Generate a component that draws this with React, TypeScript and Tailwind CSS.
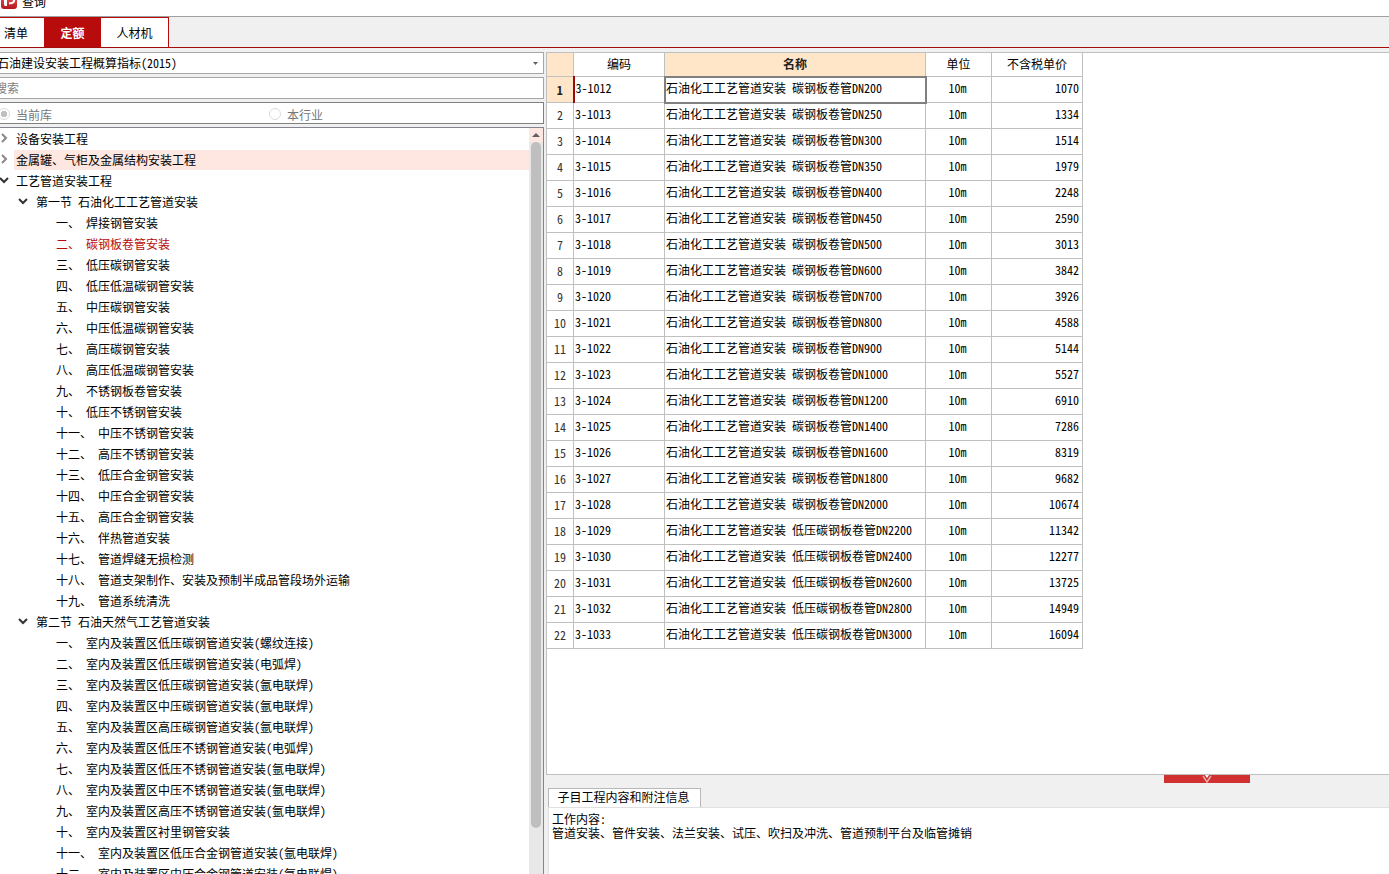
import React, { useState } from 'react';

const TABS = ['清单', '定额', '人材机'];

type TreeNode = { level: number; text: string; state?: 'open' | 'closed'; hover?: boolean };

const section = (title: string, items: string[]): TreeNode[] => [
  { level: 1, text: title, state: 'open' },
  ...items.map((text) => ({ level: 2, text })),
];

const TREE: TreeNode[] = [
  { level: 0, text: '设备安装工程', state: 'closed' },
  { level: 0, text: '金属罐、气柜及金属结构安装工程', state: 'closed', hover: true },
  { level: 0, text: '工艺管道安装工程', state: 'open' },
  ...section('第一节 石油化工工艺管道安装', [
    '一、 焊接钢管安装',
    '二、 碳钢板卷管安装',
    '三、 低压碳钢管安装',
    '四、 低压低温碳钢管安装',
    '五、 中压碳钢管安装',
    '六、 中压低温碳钢管安装',
    '七、 高压碳钢管安装',
    '八、 高压低温碳钢管安装',
    '九、 不锈钢板卷管安装',
    '十、 低压不锈钢管安装',
    '十一、 中压不锈钢管安装',
    '十二、 高压不锈钢管安装',
    '十三、 低压合金钢管安装',
    '十四、 中压合金钢管安装',
    '十五、 高压合金钢管安装',
    '十六、 伴热管道安装',
    '十七、 管道焊缝无损检测',
    '十八、 管道支架制作、安装及预制半成品管段场外运输',
    '十九、 管道系统清洗',
  ]),
  ...section('第二节 石油天然气工艺管道安装', [
    '一、 室内及装置区低压碳钢管道安装(螺纹连接)',
    '二、 室内及装置区低压碳钢管道安装(电弧焊)',
    '三、 室内及装置区低压碳钢管道安装(氩电联焊)',
    '四、 室内及装置区中压碳钢管道安装(氩电联焊)',
    '五、 室内及装置区高压碳钢管道安装(氩电联焊)',
    '六、 室内及装置区低压不锈钢管道安装(电弧焊)',
    '七、 室内及装置区低压不锈钢管道安装(氩电联焊)',
    '八、 室内及装置区中压不锈钢管道安装(氩电联焊)',
    '九、 室内及装置区高压不锈钢管道安装(氩电联焊)',
    '十、 室内及装置区衬里钢管安装',
    '十一、 室内及装置区低压合金钢管道安装(氩电联焊)',
    '十二、 室内及装置区中压合金钢管道安装(氩电联焊)',
  ]),
];

const INDENT = ['pl-4', 'pl-9', 'pl-14'];

// [pipe name, price]
const ITEMS: [string, number][] = [
  ['碳钢板卷管DN200', 1070],
  ['碳钢板卷管DN250', 1334],
  ['碳钢板卷管DN300', 1514],
  ['碳钢板卷管DN350', 1979],
  ['碳钢板卷管DN400', 2248],
  ['碳钢板卷管DN450', 2590],
  ['碳钢板卷管DN500', 3013],
  ['碳钢板卷管DN600', 3842],
  ['碳钢板卷管DN700', 3926],
  ['碳钢板卷管DN800', 4588],
  ['碳钢板卷管DN900', 5144],
  ['碳钢板卷管DN1000', 5527],
  ['碳钢板卷管DN1200', 6910],
  ['碳钢板卷管DN1400', 7286],
  ['碳钢板卷管DN1600', 8319],
  ['碳钢板卷管DN1800', 9682],
  ['碳钢板卷管DN2000', 10674],
  ['低压碳钢板卷管DN2200', 11342],
  ['低压碳钢板卷管DN2400', 12277],
  ['低压碳钢板卷管DN2600', 13725],
  ['低压碳钢板卷管DN2800', 14949],
  ['低压碳钢板卷管DN3000', 16094],
];

const Chevron = ({ open }: { open: boolean }) => (
  <svg className="h-[10px] w-[10px]" viewBox="0 0 10 10" fill="none" strokeWidth="2">
    {open ? <path d="M1 3l4 4 4-4" stroke="#333" /> : <path d="M3 1l4 4-4 4" stroke="#888" />}
  </svg>
);

const Logo = () => (
  <svg className="-mt-2 h-[17px] w-4 shrink-0" viewBox="0 0 16 17">
    <defs>
      <linearGradient id="logo" x1="0" y1="0" x2="0" y2="1">
        <stop offset="0.4" stopColor="#e0474b" />
        <stop offset="1" stopColor="#b3151b" />
      </linearGradient>
    </defs>
    <rect width="16" height="17" rx="3" fill="url(#logo)" />
    <path d="M3 6h3v8H4.500a1.500 1.500 0 0 1-1.500-1.500z" fill="#fff" />
    <path d="M5 5h5a2.800 2.800 0 0 1 0 6.200H8" fill="none" stroke="#fff" strokeWidth="2" />
  </svg>
);

function TitleBar() {
  return (
    <header className="flex h-[17px] shrink-0 items-start gap-[5px] overflow-hidden border-b border-[#a0a0a0] bg-white pl-px">
      <Logo />
      <h1 className="-mt-[6px] leading-4">查询</h1>
    </header>
  );
}

function TabBar() {
  const [active, setActive] = useState(1);
  return (
    <nav className="flex h-[31px] shrink-0 border-b border-[#a50d0d]">
      {TABS.map((tab, i) => (
        <button
          key={tab}
          onClick={() => setActive(i)}
          className={`border-t border-[#b80b0b] pt-px ${i === 0 ? 'w-11 pr-3' : i === 1 ? 'w-[57px]' : 'w-[68px] border-r'} ${
            i === active ? 'bg-[#b80b0b] font-bold text-white' : 'bg-white'
          }`}
        >
          {tab}
        </button>
      ))}
    </nav>
  );
}

function Tree() {
  const [selected, setSelected] = useState(5);
  return (
    <div className="flex min-h-0 flex-1 border-t border-r border-[#82858f] bg-white">
      <ul className="min-w-0 flex-1 overflow-hidden pt-px">
        {TREE.map((node, i) => (
          <li key={i} className="relative flex h-[21px] items-start">
            {node.state && (
              <span className={`absolute top-1 ${node.level === 0 ? '-left-px' : 'left-[18px]'}`}>
                <Chevron open={node.state === 'open'} />
              </span>
            )}
            <button
              onClick={() => setSelected(i)}
              className={`h-5 w-full pb-px text-left whitespace-nowrap ${INDENT[node.level]} ${
                node.hover ? 'bg-[linear-gradient(90deg,transparent_14px,#ffe7e1_14px)]' : ''
              } ${i === selected ? 'text-[#b80b0b]' : ''}`}
            >
              {node.text}
            </button>
          </li>
        ))}
      </ul>
      <div className="flex w-[14px] flex-col items-center bg-[#e8e8e8]">
        <button aria-label="向上滚动" className="flex h-[14px] w-full shrink-0 items-center justify-center bg-[#ffe7e1]">
          <svg className="h-1 w-2" viewBox="0 0 8 4" fill="#606060">
            <path d="M0 4l4-4 4 4z" />
          </svg>
        </button>
        <div className="h-[92%] w-[10px] rounded-full bg-[#bfbfbf]" />
      </div>
    </div>
  );
}

function Sidebar() {
  return (
    <aside className="flex w-[544px] shrink-0 flex-col gap-[3px]">
      <div className="relative -ml-1">
        <select
          aria-label="定额库"
          className="h-[22px] w-full appearance-none border border-[#a6a6a6] bg-white"
        >
          <option>石油建设安装工程概算指标(2015)</option>
        </select>
        <svg className="pointer-events-none absolute top-[10px] right-[6px] h-[3px] w-[5px]" viewBox="0 0 5 3" fill="#606060">
          <path d="M0 0h5L2.500 3z" />
        </svg>
      </div>
      <input
        aria-label="搜索"
        placeholder="搜索"
        className="-ml-[6px] h-[22px] border border-[#a6a6a6] bg-white pb-[2px] placeholder:text-[#808080]"
      />
      <fieldset className="flex h-[22px] items-center border border-l-0 border-[#808080] bg-white pt-px text-[#777]">
        {['当前库', '本行业'].map((label, i) => (
          <label key={label} className={`flex items-center gap-[6px] ${i === 0 ? '-ml-[2px] w-[271px]' : ''}`}>
            <input
              type="radio"
              name="scope"
              defaultChecked={i === 0}
              className="h-3 w-3 appearance-none rounded-full border border-[#dcdcdc] checked:bg-[radial-gradient(circle,#c0c0c0_3px,#fff_3px)]"
            />
            <span className="pt-[3px]">{label}</span>
          </label>
        ))}
      </fieldset>
      <Tree />
    </aside>
  );
}

function QuotaTable() {
  const head = 'border border-[#c0c0c0] pb-[2px] font-normal';
  const cell = 'border border-[#c0c0c0] pb-1';
  return (
    <table className="w-[537px] table-fixed border-collapse">
      <colgroup>
        <col className="w-[27px]" />
        <col className="w-[91px]" />
        <col className="w-[261px]" />
        <col className="w-[66px]" />
        <col className="w-[91px]" />
      </colgroup>
      <thead>
        <tr className="h-6">
          <th className={`${head} bg-[#ffe6c8]`} />
          <th className={head}>编码</th>
          <th className="border border-b-2 border-[#c0c0c0] border-b-[#990b0b] bg-[#ffe6c8] font-bold text-[#222]">名称</th>
          <th className={head}>单位</th>
          <th className={head}>不含税单价</th>
        </tr>
      </thead>
      <tbody>
        {ITEMS.map(([name, price], i) => (
          <tr key={name} className="h-[26px]">
            <th
              scope="row"
              className={
                i === 0
                  ? 'border border-r-2 border-[#c0c0c0] border-r-[#990b0b] bg-[#ffe6c8] font-bold text-[#222]'
                  : 'border border-[#c0c0c0] pb-px font-normal text-[#333]'
              }
            >
              {i + 1}
            </th>
            <td className={`${cell} pl-px`}>3-{1012 + i}</td>
            <td className={`${cell} pl-px ${i === 0 ? 'outline-2 -outline-offset-1 outline-[#808080]' : ''}`}>
              石油化工工艺管道安装 {name}
            </td>
            <td className={`${cell} pr-[2px] text-center`}>10m</td>
            <td className={`${cell} pr-[3px] text-right`}>{price}</td>
          </tr>
        ))}
      </tbody>
    </table>
  );
}

function DetailPanel() {
  return (
    <section className="flex h-[99px] shrink-0 flex-col">
      <div className="flex h-8 justify-end pr-[139px]">
        <button aria-label="收起" className="flex h-2 w-[86px] justify-center bg-[#d03030]">
          <svg className="h-2 w-[10px]" viewBox="0 0 10 8" fill="none" stroke="#eda9a9" strokeWidth="1.500">
            <path d="M1 1l4 6 4-6" />
            <path d="M3 0h4L5 3z" fill="#fff" stroke="none" />
          </svg>
        </button>
      </div>
      <h2 className="z-10 -mt-[19px] ml-[2px] h-[19px] w-[153px] border border-b-0 border-[#b8b8b8] bg-white pr-[2px] text-center leading-[15px]">
        子目工程内容和附注信息
      </h2>
      <div className="ml-[2px] flex-1 border-t border-l border-[#e0e0e0] bg-white pt-1 pl-[3px]">
        <p className="leading-[14px]">
          工作内容:
          <br />
          管道安装、管件安装、法兰安装、试压、吹扫及冲洗、管道预制平台及临管摊销
        </p>
      </div>
    </section>
  );
}

export default function App() {
  return (
    <div className="flex h-screen flex-col overflow-hidden bg-[#f0f0f0] font-['Noto_Sans_Mono_CJK_SC','Noto_Sans_CJK_SC',monospace] text-[12px] leading-4 text-black">
      <TitleBar />
      <TabBar />
      <div className="flex min-h-0 flex-1 gap-[2px] pt-1">
        <Sidebar />
        <main className="flex min-w-0 flex-1 flex-col">
          <div className="min-h-0 flex-1 overflow-hidden border border-r-0 border-[#c0c0c0] bg-white">
            <div className="-mt-px -ml-px">
              <QuotaTable />
            </div>
          </div>
          <DetailPanel />
        </main>
      </div>
    </div>
  );
}
